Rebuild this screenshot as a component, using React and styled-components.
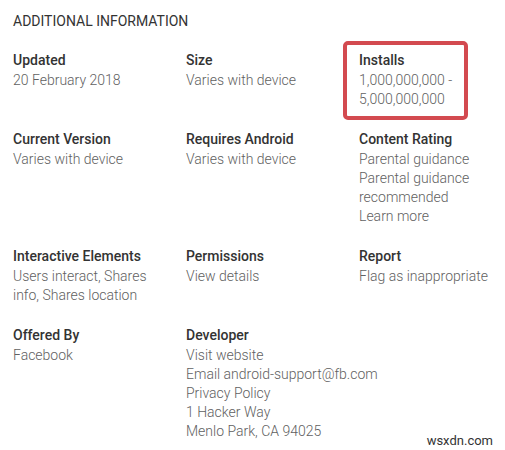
import React from "react";
import styled, { createGlobalStyle } from "styled-components";

const GlobalStyle = createGlobalStyle`
  body {
    margin: 0;
    background: #fff;
    font-family: Roboto, "Liberation Sans", Arial, sans-serif;
  }
`;

const Page = styled.section`
  position: relative;
  width: 505px;
  height: 450px;
  padding: 11px 0 0 13px;
  box-sizing: border-box;
  overflow: hidden;
`;

const Title = styled.h2`
  margin: 0;
  font-size: 14px;
  line-height: 20px;
  font-weight: 400;
  color: #333;
`;

const Grid = styled.div`
  display: grid;
  grid-template-columns: 173px 173px 1fr;
  row-gap: 20px;
  margin-top: 19px;
`;

const Cell = styled.div`
  position: relative;
`;

const Label = styled.div`
  font-size: 14px;
  line-height: 21px;
  font-weight: 500;
  color: #333;
`;

const Value = styled.div`
  font-size: 14px;
  line-height: 19px;
  font-weight: 300;
  color: #616161;
  max-width: ${(p) => (p.$wide ? "none" : "140px")};
  white-space: ${(p) => (p.$wide ? "nowrap" : "normal")};
`;

// red marker drawn around the installs figure
const Highlight = styled.span`
  position: absolute;
  left: -16px;
  top: -9px;
  width: 125px;
  height: 79px;
  box-sizing: border-box;
  border: 4px solid #d34a50;
  border-radius: 5px;
  pointer-events: none;
`;

const Watermark = styled.span`
  position: absolute;
  right: 12px;
  bottom: 2px;
  font-size: 13px;
  color: #333;
`;

const rows = [
  [
    { label: "Updated", lines: ["20 February 2018"] },
    { label: "Size", lines: ["Varies with device"] },
    { label: "Installs", lines: ["1,000,000,000 -", "5,000,000,000"], marked: true },
  ],
  [
    { label: "Current Version", lines: ["Varies with device"] },
    { label: "Requires Android", lines: ["Varies with device"] },
    {
      label: "Content Rating",
      lines: ["Parental guidance", "Parental guidance recommended", "Learn more"],
    },
  ],
  [
    { label: "Interactive Elements", lines: ["Users interact, Shares info, Shares location"] },
    { label: "Permissions", lines: ["View details"] },
    { label: "Report", lines: ["Flag as inappropriate"] },
  ],
  [
    { label: "Offered By", lines: ["Facebook"] },
    {
      label: "Developer",
      lines: [
        "Visit website",
        "Email android-support@fb.com",
        "Privacy Policy",
        "1 Hacker Way",
        "Menlo Park, CA 94025",
      ],
      wide: true,
    },
  ],
];

function InfoCell({ label, lines, marked, wide }) {
  return (
    <Cell>
      {marked && <Highlight />}
      <Label>{label}</Label>
      {lines.map((line) => (
        <Value key={line} $wide={wide}>
          {line}
        </Value>
      ))}
    </Cell>
  );
}

export default function App() {
  return (
    <>
      <GlobalStyle />
      <Page>
        <Title>ADDITIONAL INFORMATION</Title>
        <Grid>
          {rows.flat().map((item) => (
            <InfoCell key={item.label} {...item} />
          ))}
        </Grid>
        <Watermark>wsxdn.com</Watermark>
      </Page>
    </>
  );
}
